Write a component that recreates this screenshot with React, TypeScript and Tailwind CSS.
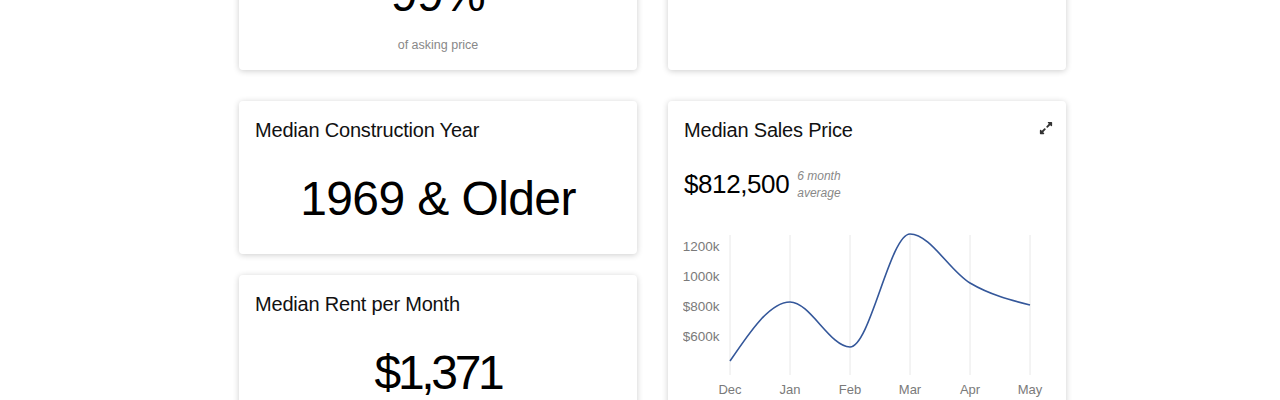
import { FaExpandAlt } from 'react-icons/fa';

const SALES = [
  { month: 'Dec', value: 433 },
  { month: 'Jan', value: 827 },
  { month: 'Feb', value: 527 },
  { month: 'Mar', value: 1280 },
  { month: 'Apr', value: 953 },
  { month: 'May', value: 807 },
];

const Y_TICKS = [1200, 1000, 800, 600];

// chart geometry (svg-local px)
const X0 = 47;
const STEP = 60;
const GRID_TOP = 10;
const GRID_BOTTOM = 150;
const yOf = (v: number) => 111 - (v - 600) * 0.15;

function monotonePath(pts: [number, number][]) {
  const n = pts.length;
  const sl: number[] = [];
  for (let i = 0; i < n - 1; i++) {
    sl.push((pts[i + 1][1] - pts[i][1]) / (pts[i + 1][0] - pts[i][0]));
  }
  const t: number[] = new Array(n).fill(0);
  for (let i = 1; i < n - 1; i++) {
    const h0 = pts[i][0] - pts[i - 1][0];
    const h1 = pts[i + 1][0] - pts[i][0];
    const s0 = sl[i - 1];
    const s1 = sl[i];
    const p = (s0 * h1 + s1 * h0) / (h0 + h1);
    t[i] = (Math.sign(s0) + Math.sign(s1)) * Math.min(Math.abs(s0), Math.abs(s1), 0.5 * Math.abs(p)) || 0;
  }
  t[0] = (3 * sl[0] - t[1]) / 2;
  t[n - 1] = (3 * sl[n - 2] - t[n - 2]) / 2;
  let d = `M${pts[0][0]},${pts[0][1]}`;
  for (let i = 0; i < n - 1; i++) {
    const [x0, y0] = pts[i];
    const [x1, y1] = pts[i + 1];
    const dx = (x1 - x0) / 3;
    d += ` C${x0 + dx},${y0 + dx * t[i]} ${x1 - dx},${y1 - dx * t[i + 1]} ${x1},${y1}`;
  }
  return d;
}

function Card({ className = '', children }: { className?: string; children: React.ReactNode }) {
  return (
    <div className={`relative rounded-[4px] bg-white shadow-[0_1px_6px_rgba(0,0,0,0.2)] ${className}`}>
      {children}
    </div>
  );
}

function StatCard({ title, value, tight }: { title: string; value: string; tight?: boolean }) {
  return (
    <Card className="h-[153px] px-4 pt-[15px]">
      <h3 className="text-[20px] leading-7 tracking-[-0.2px] text-[#111]">{title}</h3>
      <div
        className={`mt-[27px] text-center text-[48px] leading-[56px] text-black ${
          tight ? 'tracking-[-3.3px]' : 'tracking-[-0.6px]'
        }`}
      >
        {value}
      </div>
    </Card>
  );
}

function SalesChart() {
  const pts = SALES.map((s, i) => [X0 + i * STEP, yOf(s.value)] as [number, number]);
  return (
    <svg width="368" height="180" className="block overflow-hidden">
      {SALES.map((s, i) => (
        <line key={s.month} x1={X0 + i * STEP} x2={X0 + i * STEP} y1={GRID_TOP} y2={GRID_BOTTOM} stroke="#e8e8e8" strokeWidth="1" />
      ))}
      {Y_TICKS.map((v) => (
        <text key={v} x="36.5" y={yOf(v) + 5} textAnchor="end" fontSize="13.5" fill="#7a7a7a">
          ${v}k
        </text>
      ))}
      {SALES.map((s, i) => (
        <text key={s.month} x={X0 + i * STEP} y="169" textAnchor="middle" fontSize="13" fill="#7a7a7a">
          {s.month}
        </text>
      ))}
      <path d={monotonePath(pts)} fill="none" stroke="#34579a" strokeWidth="1.6" />
    </svg>
  );
}

export default function App() {
  return (
    <div className="h-[400px] overflow-hidden bg-white font-['Liberation_Sans',Arial,sans-serif]">
      <div className="-mt-[90px] pl-[239px]">
        <div className="grid grid-cols-[398px_398px] gap-x-[31px] gap-y-[31px]">
          {/* top row, mostly scrolled out of view */}
          <Card className="flex h-[160px] flex-col items-center justify-end pb-[15px]">
            <div className="text-[48px] leading-[56px] tracking-[-0.6px] text-black">99%</div>
            <div className="mt-[12px] text-[12.5px] leading-5 text-[#888]">of asking price</div>
          </Card>
          <Card className="h-[160px] px-4 pt-[65px]">
            <div className="pr-[10px] text-right text-[13px] leading-5 text-[#888]">(per sq. ft.)</div>
          </Card>

          <div className="flex flex-col gap-[21px]">
            <StatCard title="Median Construction Year" value="1969 & Older" />
            <StatCard title="Median Rent per Month" value="$1,371" tight />
          </div>

          <Card className="h-[330px] pl-[15px] pr-4 pt-[15px]">
            <div className="flex items-start justify-between pl-px">
              <h3 className="text-[20px] leading-7 tracking-[-0.2px] text-[#111]">Median Sales Price</h3>
              <FaExpandAlt className="mr-[-3px] mt-[5px] text-[14px] text-[#333]" />
            </div>
            <div className="mt-[24px] flex items-start gap-[8px] pl-px">
              <span className="text-[26px] leading-8 tracking-[-0.4px] text-black">$812,500</span>
              <span className="text-[12px] italic leading-[17px] text-[#888]">
                6 month
                <br />
                average
              </span>
            </div>
            <div className="mt-[23px]">
              <SalesChart />
            </div>
          </Card>
        </div>
      </div>
    </div>
  );
}
